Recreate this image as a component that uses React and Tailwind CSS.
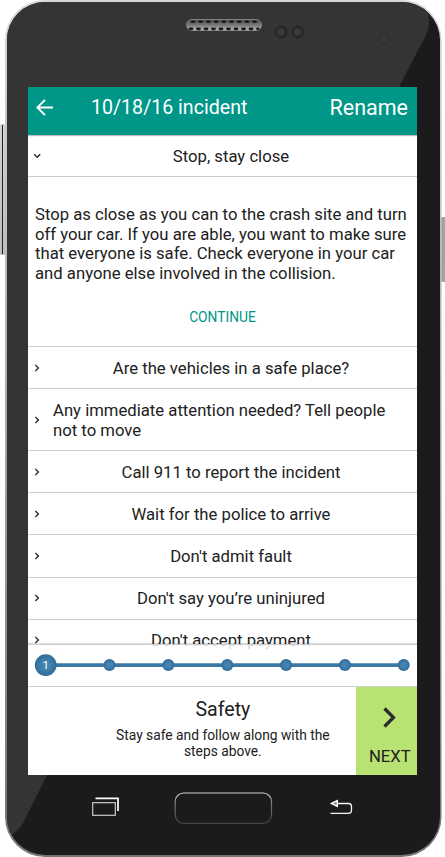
import React from "react";

const ROWS = [
  { text: "Are the vehicles in a safe place?" },
  { text: "Any immediate attention needed? Tell people not to move", tall: true },
  { text: "Call 911 to report the incident" },
  { text: "Wait for the police to arrive" },
  { text: "Don't admit fault" },
  { text: "Don't say you’re uninjured" },
  { text: "Don't accept payment" },
];

function Chevron({ down = false }) {
  return (
    <svg width="10" height="10" viewBox="0 0 10 10" className="shrink-0" fill="none" stroke="#262626" strokeWidth="1.3">
      {down ? <path d="M2.2 3.3 5.2 6.3 8.2 3.3" /> : <path d="M3.4 2 6.4 5 3.4 8" />}
    </svg>
  );
}

function Row({ text, tall, open }) {
  return (
    <div
      className={`flex shrink-0 items-center border-b border-[#cecece] pl-1 pr-2 ${tall ? "h-[62px]" : "h-[42.15px]"}`}
    >
      <Chevron down={open} />
      <span
        className={`ml-[11px] flex-1 pt-[1.8px] text-[16.7px] leading-[19.6px] ${tall ? "text-left" : "text-center whitespace-nowrap"}`}
      >
        {text}
      </span>
    </div>
  );
}

function Bezel() {
  return (
    <svg className="absolute inset-0" width="445" height="857" viewBox="0 0 445 857">
      <defs>
        <linearGradient id="rim" x1="0" y1="0" x2="0" y2="1">
          <stop offset="0" stopColor="#d6d6d6" />
          <stop offset="0.3" stopColor="#bcbcbc" />
          <stop offset="1" stopColor="#747474" />
        </linearGradient>
        <linearGradient id="key" x1="0" y1="0" x2="0" y2="1">
          <stop offset="0" stopColor="#d4d4d4" />
          <stop offset="1" stopColor="#bdbdbd" />
        </linearGradient>
        <linearGradient id="grille" x1="0" y1="0" x2="0" y2="1">
          <stop offset="0" stopColor="#4a4a4a" />
          <stop offset="0.5" stopColor="#777" />
          <stop offset="1" stopColor="#bbb" />
        </linearGradient>
        <linearGradient id="home" x1="0" y1="0" x2="0" y2="1">
          <stop offset="0" stopColor="#d0d0d0" />
          <stop offset="0.35" stopColor="#777" />
          <stop offset="1" stopColor="#444" />
        </linearGradient>
        <radialGradient id="lens">
          <stop offset="0" stopColor="#414141" />
          <stop offset="1" stopColor="#2b2b2b" />
        </radialGradient>
        <clipPath id="body">
          <rect x="7" y="2" width="433" height="853" rx="38" />
        </clipPath>
      </defs>
      <rect x="0" y="124" width="7" height="131" rx="1.5" fill="url(#key)" />
      <path d="M2.5 125V254" stroke="#222" strokeWidth="1" />
      <rect x="441" y="217" width="6" height="65" rx="1.5" fill="#a2a2a2" />
      <rect x="5" y="0" width="436.5" height="857" rx="40" fill="url(#rim)" />
      <g clipPath="url(#body)">
        <rect width="445" height="857" fill="#1b1b1b" />
        <path d="M0 0H420L428 13Q431 25 426 35L399 87L47 775L23 823Q17 833 9 836H0Z" fill="#343434" />
      </g>
      <rect x="186.5" y="19.5" width="75" height="11" rx="5.5" fill="url(#grille)" stroke="#909090" strokeWidth="0.8" />
      <path d="M192 21.8H258" stroke="#1c1c1c" strokeWidth="2.6" strokeLinecap="round" strokeDasharray="2 5.7" />
      <path d="M190 28.8H258" stroke="#1c1c1c" strokeWidth="2.8" strokeLinecap="round" strokeDasharray="2 5.5" />
      <circle cx="281" cy="32" r="5.6" fill="url(#lens)" stroke="#1d1d1d" />
      <circle cx="297.5" cy="32" r="5.6" fill="url(#lens)" stroke="#1d1d1d" />
      <circle cx="384" cy="39.5" r="6" fill="#323232" />
      <circle cx="384" cy="39.5" r="3" fill="#393939" />
      <rect x="175.2" y="793" width="96.3" height="30.3" rx="8.5" fill="none" stroke="url(#home)" strokeWidth="1.2" />
      <path d="M95.5 798.4H118V811" fill="none" stroke="#fff" strokeWidth="1.7" />
      <rect x="92.7" y="802.7" width="22.6" height="12.6" fill="none" stroke="#cacaca" strokeWidth="1.2" />
      <path d="M337 803.5H348.5Q351.5 803.5 351.5 807V810Q351.5 813.4 348.5 813.4H330.5" fill="none" stroke="#f4f4f4" strokeWidth="1.3" />
      <path d="M331.5 803.5 337.3 800.6V806.4Z" fill="#777" stroke="#fff" strokeWidth="1.4" />
    </svg>
  );
}

function Stepper() {
  return (
    <svg width="389" height="41" viewBox="0 0 389 41">
      <defs>
        <radialGradient id="dot">
          <stop offset="0.4" stopColor="#4382b1" />
          <stop offset="1" stopColor="#306b96" />
        </radialGradient>
      </defs>
      <path d="M17 20.1H375" stroke="#3a78a6" strokeWidth="3.8" />
      {[81.5, 140.4, 199.3, 258.1, 317, 375.7].map((x) => (
        <circle key={x} cx={x} cy="20.1" r="6" fill="url(#dot)" />
      ))}
      <circle cx="17.7" cy="20.1" r="10.9" fill="url(#dot)" />
      <text x="17.7" y="24.2" textAnchor="middle" fontSize="11.5" fill="#fff">
        1
      </text>
    </svg>
  );
}

export default function App() {
  return (
    <div className="relative h-[857px] w-[445px] overflow-hidden bg-white font-['Roboto',sans-serif] text-[#212121]">
      <Bezel />
      <main className="relative ml-[28px] flex h-[775px] w-[389px] flex-col pt-[87px]">
        <div className="flex min-h-0 flex-1 flex-col overflow-hidden bg-white">
          <header className="relative z-10 flex h-12 shrink-0 items-center bg-[#009788] pb-[6px] pl-2 pr-[9px] text-white shadow-[0_1px_1px_rgba(0,0,0,0.25)]">
            <svg width="18" height="18" viewBox="0 0 18 18" fill="none" stroke="#fff" strokeWidth="1.9">
              <path d="M17 8.5H2M9 0.8 1.3 8.5 9 16.2" />
            </svg>
            <h1 className="ml-[37px] text-[19.6px] leading-6 whitespace-nowrap">10/18/16 incident</h1>
            <button className="ml-auto text-[21.5px] leading-6">Rename</button>
          </header>
          <section className="flex h-[515px] shrink-0 flex-col overflow-hidden">
            <Row text="Stop, stay close" open />
            <div className="flex h-[169.9px] shrink-0 flex-col items-center border-b border-[#cecece] pt-[28px]">
              <p className="w-full pl-[7px] text-[16.72px] leading-[19.6px] whitespace-nowrap">
                Stop as close as you can to the crash site and turn
                <br />
                off your car. If you are able, you want to make sure
                <br />
                that everyone is safe. Check everyone in your car
                <br />
                and anyone else involved in the collision.
              </p>
              <button className="mt-[24px] text-[13.8px] leading-[18px] text-[#009788]">CONTINUE</button>
            </div>
            {ROWS.map((r) => (
              <Row key={r.text} {...r} />
            ))}
          </section>
          <footer className="relative -mt-[6px] flex min-h-0 flex-1 flex-col">
            <div className="h-[43px] shrink-0 border-t border-b border-[#cecece] bg-white/85 shadow-[0_-1px_1px_rgba(0,0,0,0.12)]">
              <Stepper />
            </div>
            <div className="flex min-h-0 flex-1 bg-white">
              <div className="flex flex-1 flex-col items-center pl-[62px] pt-[11px]">
                <h2 className="text-[19.6px] leading-6">Safety</h2>
                <p className="mt-[5px] text-center text-[13.8px] leading-[16px] whitespace-nowrap">
                  Stay safe and follow along with the
                  <br />
                  steps above.
                </p>
              </div>
              <button className="flex w-[61.3px] flex-col items-center bg-[#b8e272] pt-[20px]">
                <svg width="24" height="24" viewBox="0 0 24 24" className="ml-[6px]" fill="none" stroke="#2a2a2a" strokeWidth="3.2">
                  <path d="M7.5 1.5 16.5 10.5 7.5 19.5" />
                </svg>
                <span className="ml-[7px] mt-[16px] text-[16.7px] leading-5">NEXT</span>
              </button>
            </div>
          </footer>
        </div>
      </main>
    </div>
  );
}
